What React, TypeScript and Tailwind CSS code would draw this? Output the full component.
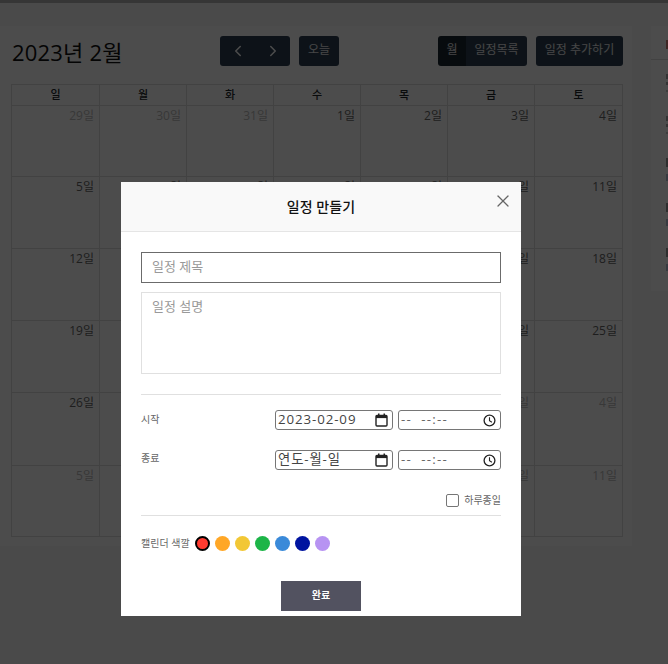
import { ChevronLeft, ChevronRight, X } from 'lucide-react';

const font = { fontFamily: '"Open Sans", "Noto Sans CJK KR", sans-serif' };

const weekDays = ['일', '월', '화', '수', '목', '금', '토'];

const weeks = [
  { h: 'h-[71px]', days: [29, 30, 31, 1, 2, 3, 4], muted: [0, 1, 2] },
  { h: 'h-[72px]', days: [5, 6, 7, 8, 9, 10, 11], muted: [] },
  { h: 'h-[72px]', days: [12, 13, 14, 15, 16, 17, 18], muted: [] },
  { h: 'h-[72px]', days: [19, 20, 21, 22, 23, 24, 25], muted: [] },
  { h: 'h-[73px]', days: [26, 27, 28, 1, 2, 3, 4], muted: [3, 4, 5, 6] },
  { h: 'h-[71px]', days: [5, 6, 7, 8, 9, 10, 11], muted: [0, 1, 2, 3, 4, 5, 6] },
];

const colors = ['#ff3b30', '#ffa726', '#f2c735', '#1db548', '#3a8ad9', '#0014a0', '#b793f2'];

function CalendarIcon() {
  return (
    <svg width="13" height="14" viewBox="0 0 13 14" className="shrink-0">
      <rect x="1" y="2.5" width="11" height="10.5" rx="1" fill="none" stroke="#222" strokeWidth="1.4" />
      <rect x="1" y="2.5" width="11" height="2.6" fill="#222" />
      <rect x="3" y="0.5" width="1.5" height="2.5" fill="#222" />
      <rect x="8.5" y="0.5" width="1.5" height="2.5" fill="#222" />
    </svg>
  );
}

function ClockIcon() {
  return (
    <svg width="13" height="13" viewBox="0 0 13 13" className="shrink-0">
      <circle cx="6.5" cy="6.5" r="5.4" fill="none" stroke="#222" strokeWidth="1.3" />
      <path d="M6.5 3.3V6.7L8.9 8.2" fill="none" stroke="#222" strokeWidth="1.1" />
    </svg>
  );
}

function DateField({ value }: { value: string }) {
  return (
    <div className="flex h-5 w-[118px] items-center justify-between rounded-[3px] border border-[#767676] pl-[2px] pr-[4px] text-[13.3px] tracking-[0.9px] text-[#444]">
      <span className="-mt-[1px] leading-none">{value}</span>
      <CalendarIcon />
    </div>
  );
}

function TimeField() {
  return (
    <div className="flex h-5 w-[103px] items-center justify-between rounded-[3px] border border-[#767676] pl-[2px] pr-[4px] text-[13.3px] tracking-[1.2px] text-[#666]">
      <span className="whitespace-pre leading-none">{'--  --:--'}</span>
      <ClockIcon />
    </div>
  );
}

export default function App() {
  return (
    <div className="relative h-[664px] w-[668px] overflow-hidden bg-[#f7f7f7]" style={font}>
      <div className="h-[3px] bg-[#b4b4b4]" />

      <div className="flex items-start gap-[19px] pt-[23px]">
        {/* Calendar card */}
        <div className="h-[520px] w-[632px] shrink-0 bg-white pl-[11px] pr-[9px] pt-[10px]">
          <div className="flex h-[30px] items-center">
            <h2 className="w-[209px] pl-[1px] pt-[1px] text-[22px] leading-none tracking-[0.2px] text-[#111]">2023년 2월</h2>
            <div className="flex h-[30px] w-[70px] items-center justify-around rounded-[3px] bg-[#2c3e50] text-white">
              <ChevronLeft size={18} />
              <ChevronRight size={18} />
            </div>
            <div className="ml-[9px] flex h-[30px] w-10 items-center justify-center rounded-[3px] bg-[#2c3e50] pb-[2px] text-[12px] text-white/90">
              오늘
            </div>
            <div className="ml-[99px] flex h-[30px] w-[89px] overflow-hidden rounded-[3px] text-[12px] text-white/90">
              <div className="flex w-7 items-center justify-center bg-[#1a252f] pb-[2px]">월</div>
              <div className="flex flex-1 items-center justify-center bg-[#2c3e50] pb-[2px]">일정목록</div>
            </div>
            <div className="ml-[9px] flex h-[30px] w-[87px] items-center justify-center rounded-[3px] bg-[#2c3e50] pb-[2px] text-[12px] text-white/90">
              일정 추가하기
            </div>
          </div>

          <div className="mt-[18px] border-l border-t border-[#dddddd]">
            <div className="grid h-[21px] grid-cols-[88px_87px_87px_87px_87px_87px_88px]">
              {weekDays.map((day) => (
                <div
                  key={day}
                  className="flex items-center justify-center border-b border-r border-[#dddddd] text-[11px] font-medium text-[#212529]"
                >
                  {day}
                </div>
              ))}
            </div>
            {weeks.map((week, i) => (
              <div key={i} className={`grid grid-cols-[88px_87px_87px_87px_87px_87px_88px] ${week.h}`}>
                {week.days.map((day, j) => (
                  <div
                    key={j}
                    className={`border-b border-r border-[#dddddd] pr-[5px] pt-[1px] text-right text-[12px] leading-[18px] ${
                      week.muted.includes(j) ? 'text-[#bbb]' : 'text-[#666]'
                    }`}
                  >
                    {day}일
                  </div>
                ))}
              </div>
            ))}
          </div>
        </div>

        {/* Side panel, mostly cut off by the window */}
        <div className="h-[265px] w-[200px] shrink-0 bg-white">
          <div className="h-[34px] border-b border-[#dddddd] pl-[15px] pt-[14px]">
            <div className="h-[9px] w-[2px] bg-[#d08078]" />
          </div>
          <div className="pl-[15px] pt-[14px]">
            <div className="h-[5px] w-[2px] bg-[#aaa]" />
            <div className="mt-[3px] h-[3px] w-[2px] bg-[#aaa]" />
            <div className="mt-[5px] h-[2px] w-[2px] bg-[#ccc]" />
            <div className="mt-[24px] h-[5px] w-[2px] bg-[#aaa]" />
            <div className="mt-[3px] h-[3px] w-[2px] bg-[#aaa]" />
            <div className="mt-[5px] h-[2px] w-[2px] bg-[#ccc]" />
            <div className="mt-[24px] h-[9px] w-[2px] bg-[#999]" />
            <div className="mt-[7px] h-[7px] w-[2px] bg-[#b8c4d8]" />
            <div className="mt-[22px] h-[9px] w-[2px] bg-[#999]" />
            <div className="mt-[7px] h-[7px] w-[2px] bg-[#b8c4d8]" />
            <div className="mt-[22px] h-[9px] w-[2px] bg-[#999]" />
            <div className="mt-[7px] h-[7px] w-[2px] bg-[#b8c4d8]" />
          </div>
        </div>
      </div>

      {/* Backdrop */}
      <div className="absolute inset-0 bg-black/70" />

      {/* Modal */}
      <div className="absolute left-[121px] top-[182px] h-[434px] w-[400px] bg-white">
        <div className="relative flex h-[50px] items-center justify-center border-b border-[#e5e5e5] bg-[#f9f9f9]">
          <span className="text-[14px] font-medium tracking-[0.1px] text-[#111]">일정 만들기</span>
          <X size={20} strokeWidth={1.5} className="absolute right-[8px] top-[9px] text-[#666]" />
        </div>

        <div className="px-5 pt-5">
          <div className="flex h-[31px] items-center border border-[#6b6b6b] px-[10px] pb-[1px] text-[13px] text-[#999]">
            일정 제목
          </div>
          <div className="mt-[9px] h-[82px] border border-[#e0e0e0] px-[10px] pt-[4px] text-[13px] text-[#999]">
            일정 설명
          </div>

          <div className="mt-5 border-t border-[#e0e0e0]" />

          <div className="mt-[15px] flex h-5 items-center text-[10px] text-[#666]">
            <span className="-mt-[2px] flex-1">시작</span>
            <DateField value="2023-02-09" />
            <div className="ml-[5px]">
              <TimeField />
            </div>
          </div>
          <div className="mt-5 flex h-5 items-center text-[10px] text-[#666]">
            <span className="-mt-[3px] flex-1">종료</span>
            <DateField value="연도-월-일" />
            <div className="ml-[5px]">
              <TimeField />
            </div>
          </div>

          <div className="mt-[24px] flex items-center justify-end gap-[5px] text-[10px] text-[#666]">
            <span className="h-[13px] w-[13px] rounded-[2px] border border-[#767676]" />
            <span className="-mt-[2px] leading-none">하루종일</span>
          </div>

          <div className="mt-2 border-t border-[#e0e0e0]" />

          <div className="mt-[19px] flex h-4 items-center text-[10px] text-[#666]">
            <span className="mr-[5px]">캘린더 색깔</span>
            <div className="flex gap-[5px]">
              {colors.map((color, i) => (
                <span
                  key={color}
                  className={`h-[15px] w-[15px] rounded-full ${i === 0 ? 'border-2 border-black' : ''}`}
                  style={{ backgroundColor: color }}
                />
              ))}
            </div>
          </div>

          <div className="mt-[30px] flex justify-center">
            <div className="flex h-[30px] w-20 items-center justify-center bg-[#525260] pb-[2px] text-[10px] font-bold text-white">
              완료
            </div>
          </div>
        </div>
      </div>
    </div>
  );
}
